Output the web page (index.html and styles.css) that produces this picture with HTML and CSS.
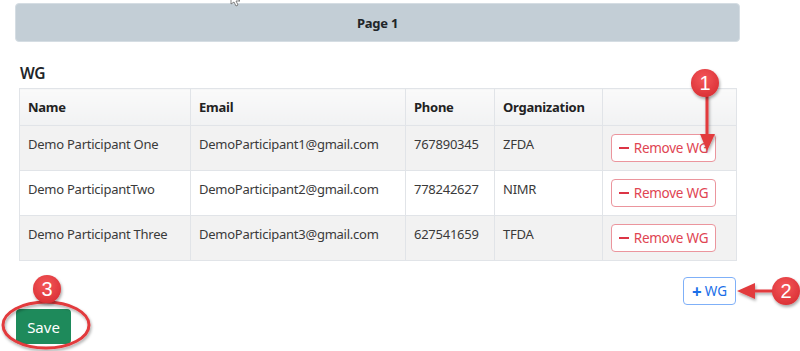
FILE: index.html
```html
<!DOCTYPE html>
<html lang="en">
<head>
<meta charset="utf-8">
<title>WG</title>
<link rel="stylesheet" href="styles.css">
</head>
<body>
<div class="wrap">
  <div class="page-bar">Page 1</div>
  <div class="section">
    <h2 class="title">WG</h2>
    <table class="grid">
      <colgroup>
        <col class="c-name"><col class="c-email"><col class="c-phone"><col class="c-org"><col class="c-act">
      </colgroup>
      <thead>
        <tr><th>Name</th><th>Email</th><th>Phone</th><th>Organization</th><th></th></tr>
      </thead>
      <tbody>
        <tr class="odd">
          <td>Demo Participant One</td><td>DemoParticipant1@gmail.com</td><td>767890345</td><td>ZFDA</td>
          <td><button class="btn-remove"><span class="minus"></span>Remove WG</button></td>
        </tr>
        <tr>
          <td>Demo ParticipantTwo</td><td>DemoParticipant2@gmail.com</td><td>778242627</td><td>NIMR</td>
          <td><button class="btn-remove"><span class="minus"></span>Remove WG</button></td>
        </tr>
        <tr class="odd">
          <td>Demo Participant Three</td><td>DemoParticipant3@gmail.com</td><td>627541659</td><td>TFDA</td>
          <td><button class="btn-remove"><span class="minus"></span>Remove WG</button></td>
        </tr>
      </tbody>
    </table>
    <div class="add-row">
      <button class="btn-add"><span class="plus">+</span>WG</button>
    </div>
  </div>
  <button class="btn-save">Save</button>
</div>

<svg class="overlay" width="800" height="351" viewBox="0 0 800 351" xmlns="http://www.w3.org/2000/svg">
  <defs>
    <radialGradient id="badge" cx="0.45" cy="0.35" r="0.7">
      <stop offset="0" stop-color="#f4575a"/>
      <stop offset="1" stop-color="#d92f34"/>
    </radialGradient>
    <filter id="sh" x="-30%" y="-30%" width="160%" height="160%">
      <feDropShadow dx="1" dy="2" stdDeviation="1.5" flood-color="#000" flood-opacity="0.35"/>
    </filter>
  </defs>
  <!-- cursor -->
  <path d="M231 -6 L231 4 L234 2 L236 6 L238 5 L236 1 L240 1 Z" fill="#fff" stroke="#666" stroke-width="0.8"/>
  <!-- arrow 1 -->
  <g filter="url(#sh)">
    <line x1="707" y1="95" x2="707" y2="138" stroke="#e23a3d" stroke-width="3"/>
    <path d="M700 134 L715 134 L707 151 Z" fill="#e23a3d"/>
  </g>
  <g filter="url(#sh)">
    <circle cx="705" cy="83" r="14" fill="url(#badge)"/>
  </g>
  <text x="705" y="90" class="badge-num" text-anchor="middle">1</text>
  <!-- arrow 2 -->
  <g filter="url(#sh)">
    <line x1="752" y1="291" x2="775" y2="291" stroke="#e23a3d" stroke-width="3"/>
    <path d="M755 283 L755 299 L737 291 Z" fill="#e23a3d"/>
  </g>
  <g filter="url(#sh)">
    <circle cx="786" cy="291" r="14" fill="url(#badge)"/>
  </g>
  <text x="786" y="298" class="badge-num" text-anchor="middle">2</text>
  <!-- ellipse 3 -->
  <g filter="url(#sh)">
    <ellipse cx="46" cy="325" rx="43" ry="23" fill="none" stroke="#e23a3d" stroke-width="3"/>
  </g>
  <g filter="url(#sh)">
    <circle cx="47" cy="289" r="14" fill="url(#badge)"/>
  </g>
  <text x="47" y="296" class="badge-num" text-anchor="middle">3</text>
</svg>
</body>
</html>
```

FILE: styles.css
```css
* { box-sizing: border-box; }

body {
  margin: 0;
  background: #fff;
  color: #212529;
  font-family: "Noto Sans", "Open Sans", sans-serif;
  font-size: 13px;
  letter-spacing: -0.25px;
  position: relative;
  width: 800px;
  height: 351px;
  overflow: hidden;
}

.wrap {
  width: 725px;
  margin-left: 15px;
  padding-top: 3px;
}

.page-bar {
  height: 39px;
  background: #c3ced6;
  border: 1px solid #d5dde3;
  border-radius: 4px;
  display: flex;
  align-items: center;
  justify-content: center;
  font-weight: 700;
  font-size: 13px;
  color: #212529;
}

.section {
  padding: 0 4px;
}

.title {
  margin: 0;
  padding-top: 21px;
  height: 46px;
  font-size: 15.5px;
  line-height: 20px;
  font-weight: 600;
  padding-left: 1px;
}

.grid {
  width: 717px;
  border-collapse: collapse;
  table-layout: fixed;
}

.c-name { width: 171px; }
.c-email { width: 215px; }
.c-phone { width: 89px; }
.c-org { width: 108px; }
.c-act { width: 134px; }

.grid th,
.grid td {
  border: 1px solid #e1e4e8;
  text-align: left;
  vertical-align: top;
  padding: 8px 8px;
  line-height: 20px;
}

.grid th {
  height: 36px;
  padding-top: 8px;
  font-weight: 700;
  color: #222;
  background: linear-gradient(#fafafa, #f1f2f3);
}

.grid td {
  height: 45px;
  padding-top: 8px;
  color: #3a3a3a;
}

.grid tr.odd td {
  background: #f2f2f2;
}

.btn-remove {
  height: 28px;
  width: 105px;
  padding: 0;
  font-family: inherit;
  font-size: 13.5px;
  letter-spacing: -0.25px;
  color: #e04452;
  background: #fff;
  border: 1px solid #eb959d;
  border-radius: 4px;
  display: inline-flex;
  align-items: center;
  justify-content: center;
  gap: 5px;
}

.minus {
  width: 10px;
  height: 2px;
  background: #dc3545;
  display: inline-block;
}

.add-row {
  display: flex;
  justify-content: flex-end;
  margin-top: 16px;
}

.btn-add {
  height: 28px;
  width: 53px;
  padding: 0;
  font-family: inherit;
  font-size: 13.5px;
  color: #1a6fe8;
  background: #fff;
  border: 1px solid #7fb0f8;
  border-radius: 4px;
  display: inline-flex;
  align-items: center;
  justify-content: center;
  gap: 3px;
}

.plus {
  font-weight: 700;
  font-size: 17px;
  line-height: 1;
}

.btn-save {
  margin-top: 4px;
  margin-left: 1px;
  height: 35px;
  width: 55px;
  padding: 0;
  font-family: inherit;
  font-size: 15px;
  letter-spacing: 0;
  color: #fff;
  background: #1e8a5b;
  border: none;
  border-radius: 4px;
}

.overlay {
  position: absolute;
  left: 0;
  top: 0;
  pointer-events: none;
}

.badge-num {
  font-family: "Liberation Sans", Arial, sans-serif;
  font-size: 20px;
  fill: #fff;
}
```
